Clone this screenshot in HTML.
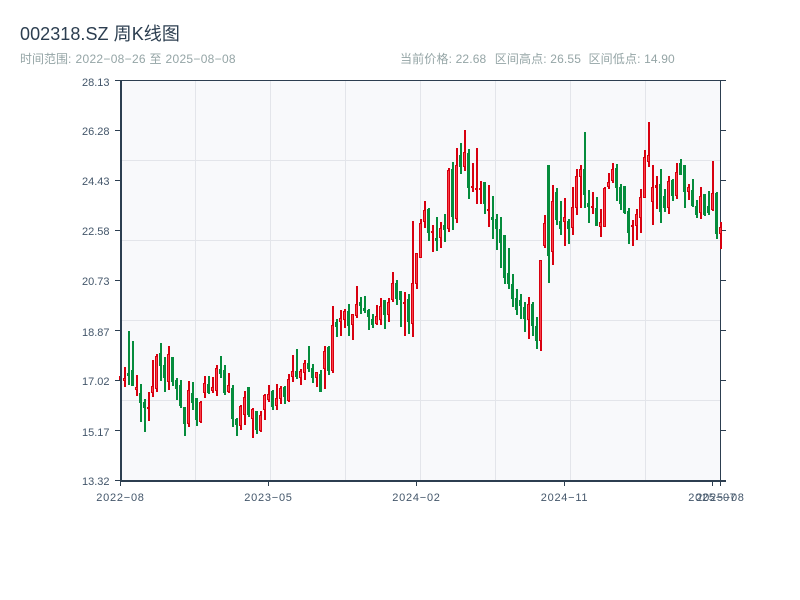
<!DOCTYPE html>
<html><head><meta charset="utf-8"><style>
html,body{margin:0;padding:0;background:#fff;width:800px;height:600px;overflow:hidden}
svg{position:absolute;left:0;top:0}
text{font-family:"Liberation Sans","Noto Sans CJK SC",sans-serif}
.t{font-size:18px;fill:#2c3e50;letter-spacing:.06px}
.s{font-size:12px;fill:#95a5a6}
.d{letter-spacing:.3px}
.r{letter-spacing:.15px}
.a{font-size:11px;fill:#43566a}
.x{letter-spacing:.75px}
</style></head><body>
<svg width="800" height="600" viewBox="0 0 800 600">
<text class="t" x="20" y="40">002318.SZ 周K线图</text>
<text class="s" x="20" y="63">时间范围:</text>
<text class="s d" x="75.5" y="63">2022−08−26</text>
<text class="s" x="149.5" y="63">至</text>
<text class="s d" x="165.5" y="63">2025−08−08</text>
<text class="s r" x="400" y="63">当前价格: 22.68</text>
<text class="s r" x="494.7" y="63">区间高点: 26.55</text>
<text class="s r" x="588.5" y="63">区间低点: 14.90</text>
<rect x="121" y="81" width="599" height="400" fill="#f8f9fb"/>
<path d="M195.5 81V481M270.5 81V481M345.5 81V481M420.5 81V481M495.5 81V481M570.5 81V481M645.5 81V481M121 160.5H720M121 240.5H720M121 320.5H720M121 400.5H720" stroke="#e3e5ea" fill="none"/>
<path d="M115 80.5H726M720.5 80V481M720 130.5h6M720 180.5h6M720 230.5h6M720 280.5h6M720 330.5h6M720 380.5h6M720 430.5h6" stroke="#2c3e50" fill="none"/>
<g fill="none">
<path stroke="#d8000f" stroke-width="2" d="M121 375V380M125 367V387M137 375V396M149 392V421M153 360V397M157 354V392M169 346V390M189 381V427M201 401V423M205 376V398M213 377V393M217 365V396M229 373V393M241 405V430M245 391V425M253 408V438M261 411V432M265 394V420M269 385V402M277 384V410M281 386V404M289 374V402M293 355V382M301 369V385M305 360V380M317 372V387M325 346V389M333 306V373M341 310V336M345 309V328M353 314V340M357 286V318M377 305V325M381 298V325M389 298V322M393 272V302M405 292V336M413 221V337M417 253V289M421 219V258M425 201V228M433 225V252M441 222V248M449 168V232M457 148V223M465 130V171M473 163V192M477 148V204M481 181V204M489 185V227M529 297V339M541 260V351M545 215V248M553 185V265M565 198V246M573 187V235M577 169V215M581 165V208M593 192V214M601 209V237M605 187V227M609 173V189M613 163V183M633 220V246M637 209V240M641 189V233M645 150V198M649 122V167M653 165V225M657 176V209M669 176V214M677 163V199M689 184V200M701 187V219M713 161V211M721 222V249"/>
<path stroke="#d8000f" stroke-width="3" d="M120.5 376V380M124.5 378V381M136.5 387V390M148.5 407V409M152.5 386V393M156.5 356V389M168.5 354V382M188.5 390V424M200.5 402V422M204.5 383V393M212.5 387V391M216.5 368V391M228.5 385V392M240.5 406V426M244.5 397V415M252.5 409V419M260.5 415V431M264.5 395V410M268.5 394V400M276.5 398V406M280.5 388V399M288.5 379V401M292.5 371V377M300.5 371V378M304.5 363V373M316.5 372V378M324.5 351V369M332.5 325V371M340.5 318V322M344.5 311V320M352.5 314V325M356.5 304V316M376.5 316V324M380.5 306V320M388.5 302V315M392.5 283V300M404.5 302V304M412.5 283V324M416.5 253V284M420.5 223V258M424.5 210V222M432.5 231V233M440.5 228V238M448.5 170V229M456.5 165V219M464.5 152V167M472.5 186V188M476.5 188V190M480.5 188V190M488.5 209V211M528.5 304V320M540.5 260V341M544.5 223V246M552.5 201V252M564.5 217V222M572.5 207V228M576.5 176V208M580.5 169V177M592.5 206V208M600.5 222V227M604.5 188V227M608.5 182V187M612.5 169V181M632.5 225V227M636.5 214V226M640.5 197V218M644.5 157V198M648.5 155V162M652.5 187V202M656.5 185V188M668.5 181V208M676.5 172V196M688.5 187V192M700.5 196V213M712.5 193V210M720.5 227V234"/>
<path stroke="#f8404a" stroke-width="1" d="M124.5 379V380M136.5 388V389M152.5 387V392M156.5 357V388M168.5 355V381M188.5 391V423M200.5 403V421M204.5 384V392M212.5 388V390M216.5 369V390M228.5 386V391M240.5 407V425M244.5 398V414M252.5 410V418M260.5 416V430M264.5 396V409M268.5 395V399M276.5 399V405M280.5 389V398M288.5 380V400M292.5 372V376M300.5 372V377M304.5 364V372M316.5 373V377M324.5 352V368M332.5 326V370M340.5 319V321M344.5 312V319M352.5 315V324M356.5 305V315M376.5 317V323M380.5 307V319M388.5 303V314M392.5 284V299M412.5 284V323M416.5 254V283M420.5 224V257M424.5 211V221M440.5 229V237M448.5 171V228M456.5 166V218M464.5 153V166M528.5 305V319M540.5 261V340M544.5 224V245M552.5 202V251M564.5 218V221M572.5 208V227M576.5 177V207M580.5 170V176M600.5 223V226M604.5 189V226M608.5 183V186M612.5 170V180M636.5 215V225M640.5 198V217M644.5 158V197M648.5 156V161M652.5 188V201M668.5 182V207M676.5 173V195M688.5 188V191M700.5 197V212M712.5 194V209M720.5 228V233"/>
<path stroke="#058c3c" stroke-width="2" d="M129 331V385M133 341V386M141 384V422M145 399V432M161 343V381M165 357V392M173 357V386M177 378V400M181 380V408M185 407V436M193 382V410M197 398V426M209 376V394M221 356V378M225 365V395M233 385V427M237 418V436M249 387V417M257 411V434M273 390V410M285 386V404M297 349V379M309 346V372M313 364V383M321 370V392M329 346V375M337 319V337M349 304V336M361 297V314M365 296V313M369 309V330M373 314V328M385 300V329M397 280V305M401 291V327M409 294V334M429 208V241M437 217V251M445 214V242M453 162V230M461 143V174M469 149V199M485 182V214M493 196V239M497 214V250M501 217V268M505 235V284M509 248V289M513 274V307M517 289V315M521 294V319M525 302V332M533 302V336M537 317V349M549 165V283M557 188V225M561 201V235M569 219V244M585 132V208M589 190V223M597 197V226M617 164V201M621 184V210M625 186V214M629 208V244M661 169V223M665 189V212M673 179V201M681 159V175M685 165V208M693 179V207M697 200V218M705 194V216M709 191V215M717 192V239"/>
<path stroke="#058c3c" stroke-width="3" d="M128.5 373V376M132.5 370V386M140.5 393V403M144.5 402V408M160.5 353V366M164.5 365V378M172.5 357V382M176.5 380V389M180.5 385V406M184.5 407V424M192.5 393V403M196.5 398V420M208.5 384V393M220.5 369V374M224.5 370V393M232.5 388V419M236.5 419V425M248.5 387V415M256.5 411V430M272.5 391V407M284.5 387V397M296.5 371V377M308.5 363V369M312.5 368V378M320.5 374V392M328.5 347V371M336.5 322V327M348.5 311V326M360.5 302V306M364.5 308V311M368.5 310V317M372.5 319V325M384.5 300V315M396.5 283V299M400.5 291V300M408.5 299V322M428.5 209V233M436.5 238V241M444.5 225V230M452.5 169V217M460.5 155V167M468.5 153V188M484.5 182V204M492.5 217V220M496.5 219V229M500.5 229V243M504.5 235V278M508.5 273V284M512.5 284V299M516.5 298V310M520.5 300V306M524.5 307V319M532.5 304V326M536.5 326V341M548.5 165V256M556.5 192V220M560.5 221V229M568.5 221V229M584.5 169V195M588.5 203V207M596.5 208V226M616.5 168V188M620.5 187V204M624.5 186V213M628.5 211V233M660.5 184V212M664.5 196V208M672.5 180V196M680.5 163V175M684.5 165V192M692.5 190V206M696.5 206V215M704.5 194V215M708.5 206V213M716.5 193V234"/>
</g>
<path d="M121 80V482M120 481H726" stroke="#2c3e50" stroke-width="2" fill="none"/>
<path d="M115 80.5h5M115 130.5h5M115 180.5h5M115 230.5h5M115 280.5h5M115 330.5h5M115 380.5h5M115 430.5h5M115 480.5h5M120.5 482v4M268.5 482v4M416.5 482v4M564.5 482v4M712.5 482v4M720.5 482v4" stroke="#2c3e50" fill="none"/>
<g text-anchor="end">
<text class="a" x="109.5" y="86">28.13</text>
<text class="a" x="109.5" y="135">26.28</text>
<text class="a" x="109.5" y="185">24.43</text>
<text class="a" x="109.5" y="235">22.58</text>
<text class="a" x="109.5" y="285">20.73</text>
<text class="a" x="109.5" y="336">18.87</text>
<text class="a" x="109.5" y="385">17.02</text>
<text class="a" x="109.5" y="436">15.17</text>
<text class="a" x="109.5" y="485">13.32</text>
</g>
<g text-anchor="middle">
<text class="a x" x="120.5" y="501">2022−08</text>
<text class="a x" x="268.5" y="501">2023−05</text>
<text class="a x" x="416.5" y="501">2024−02</text>
<text class="a x" x="564.5" y="501">2024−11</text>
<text class="a x" x="712.5" y="501">2025−07</text>
<text class="a x" x="720.5" y="501">2025−08</text>
</g>
</svg>
</body></html>
